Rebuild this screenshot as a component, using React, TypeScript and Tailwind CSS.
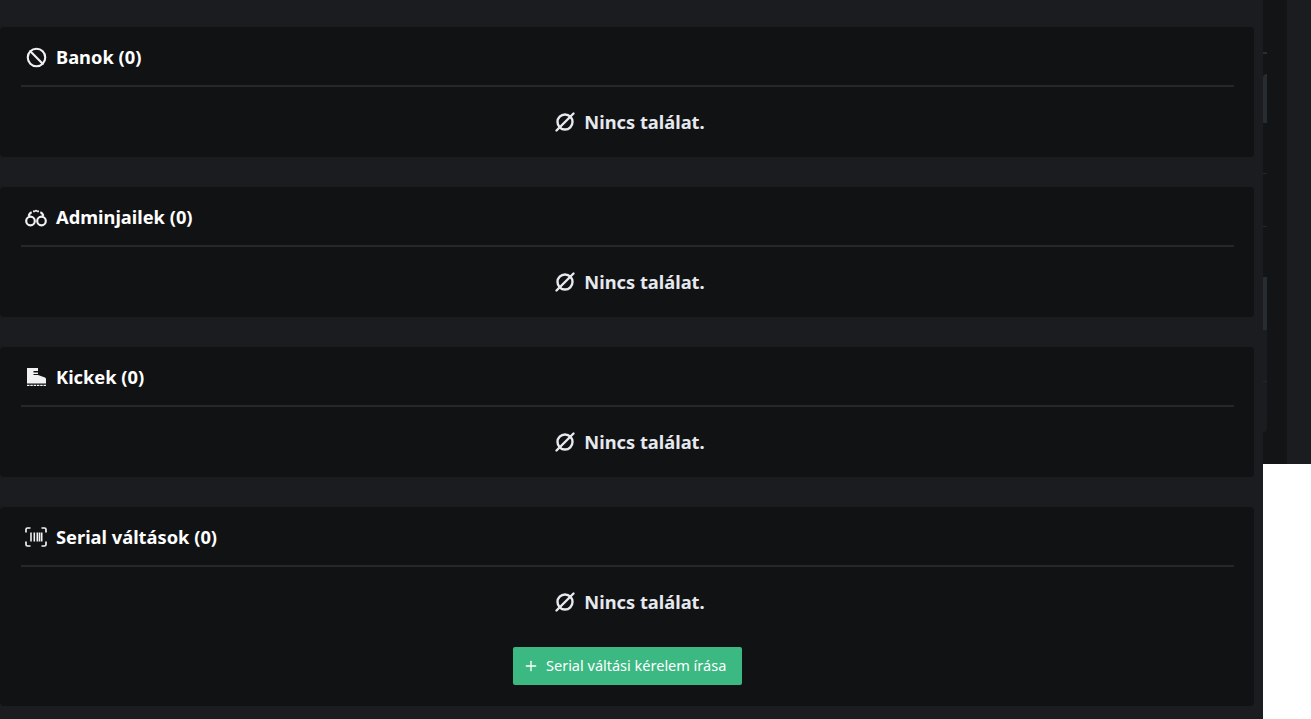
import { Ban, Plus } from "lucide-react";
import type { ReactNode } from "react";

function HandcuffsIcon() {
  return (
    <svg width="27" height="27" viewBox="0 0 24 24" fill="none" stroke="currentColor" strokeWidth="2.200">
      <circle cx="6.500" cy="15.500" r="4.300" />
      <circle cx="17.500" cy="15.500" r="4.300" />
      <path d="M4.800 10.500c.3-2.200 1.300-3.300 2.900-3.800M19.200 10.500c-.3-2.200-1.300-3.300-2.900-3.800" />
      <path d="M10 5.800h.01M12 5.300h.01M14 5.800h.01" strokeLinecap="round" />
    </svg>
  );
}

function BootIcon() {
  return (
    <svg width="24" height="24" viewBox="0 0 24 24" fill="currentColor">
      <path d="M3 3h11v3H9.500v1.500H14V9H9.500v1H14l7 2.500c.7.300 1 .9 1 1.600V18.500H3z" />
      <path d="M3 19.700h2.500v1.300H3zM6.300 19.700h2.500v1.300H6.300zM9.600 19.700h2.500v1.300H9.600zM12.900 19.700h2.500v1.300h-2.500zM16.200 19.700h2.500v1.300h-2.500zM19.500 19.700H22v1.300h-2.500z" />
    </svg>
  );
}

function BarcodeIcon() {
  return (
    <svg width="26" height="26" viewBox="0 0 24 24" fill="none" stroke="currentColor" strokeWidth="1.700">
      <path d="M2 7.500V4.500A1.500 1.500 0 0 1 3.500 3H6.500M17.500 3h3A1.500 1.500 0 0 1 22 4.500V7.500M22 16.500v3a1.500 1.500 0 0 1-1.500 1.500H17.500M6.500 21h-3A1.500 1.500 0 0 1 2 19.500V16.500" />
      <path d="M7 7.500v9M10.300 7.500v9M13.300 7.500v9M15.500 7.500v9M17.700 7.500v9" strokeWidth="1.600" />
    </svg>
  );
}

function EmptyIcon() {
  return (
    <svg width="24" height="24" viewBox="0 0 24 24" fill="none" stroke="currentColor" strokeWidth="2.400" strokeLinecap="round">
      <circle cx="12" cy="12" r="7.500" />
      <path d="M3.500 20.500 20.500 3.500" />
    </svg>
  );
}

function Section({ icon, title, children }: { icon: ReactNode; title: string; children?: ReactNode }) {
  return (
    <section className="mb-[30px] rounded-[4px] bg-[#111214] pb-[21px] pl-[21px] pr-[20px] pt-[14px] last:mb-0">
      <div className="flex h-[32px] items-center gap-[8px] text-white">
        <span className="flex w-[27px] justify-center pl-[3px] text-[#f1f1f1]">{icon}</span>
        <h2 className="text-[18.300px] font-bold leading-none">{title}</h2>
      </div>
      <div className="mt-[12px] h-[2px] bg-[#25282b]" />
      <div className="mb-[2px] mt-[23px] flex h-[24px] items-center justify-center gap-[7px] pl-[3px] text-[#e6e9ee]">
        <EmptyIcon />
        <span className="text-[18.300px] font-bold leading-none">Nincs találat.</span>
      </div>
      {children}
    </section>
  );
}

export default function App() {
  return (
    <div className="flex h-[719px] w-[1311px] items-start overflow-hidden bg-white font-['Noto_Sans',sans-serif]">
      <main className="h-[719px] w-[1263px] shrink-0 bg-[#1a1c20] pr-[9px] pt-[27px]">
        <Section icon={<Ban size={21} strokeWidth={2.400} />} title="Banok (0)" />
        <Section icon={<HandcuffsIcon />} title="Adminjailek (0)" />
        <Section icon={<BootIcon />} title="Kickek (0)" />
        <Section icon={<BarcodeIcon />} title="Serial váltások (0)">
          <div className="mt-[33px] flex justify-center">
            <button className="flex h-[38px] w-[229px] items-center gap-[7px] rounded-[2px] bg-[#3cb982] pl-[10px] text-[14.500px] text-white">
              <Plus size={16} strokeWidth={2} />
              Serial váltási kérelem írása
            </button>
          </div>
        </Section>
      </main>
      <aside className="flex h-[464px] w-[48px] shrink-0">
        <div className="flex w-[4px] flex-col bg-[#131416]">
          <div className="mt-[52px] h-[2px] bg-[#2b2e31]" />
          <div className="mt-[20px] h-[49px] rounded-tl-[4px] bg-[#272c30]" />
          <div className="mt-[50px] h-px bg-[#25282b]" />
          <div className="mt-[52px] h-px bg-[#25282b]" />
          <div className="mt-[50px] h-[53px] bg-[#272c30]" />
          <div className="h-[102px] rounded-br-[4px] bg-[#1a1c20] pt-[51px]">
            <div className="h-px bg-[#25282b]" />
          </div>
        </div>
        <div className="w-[20px] bg-[#131416]" />
        <div className="w-[24px] bg-[#1a1c20]" />
      </aside>
    </div>
  );
}
